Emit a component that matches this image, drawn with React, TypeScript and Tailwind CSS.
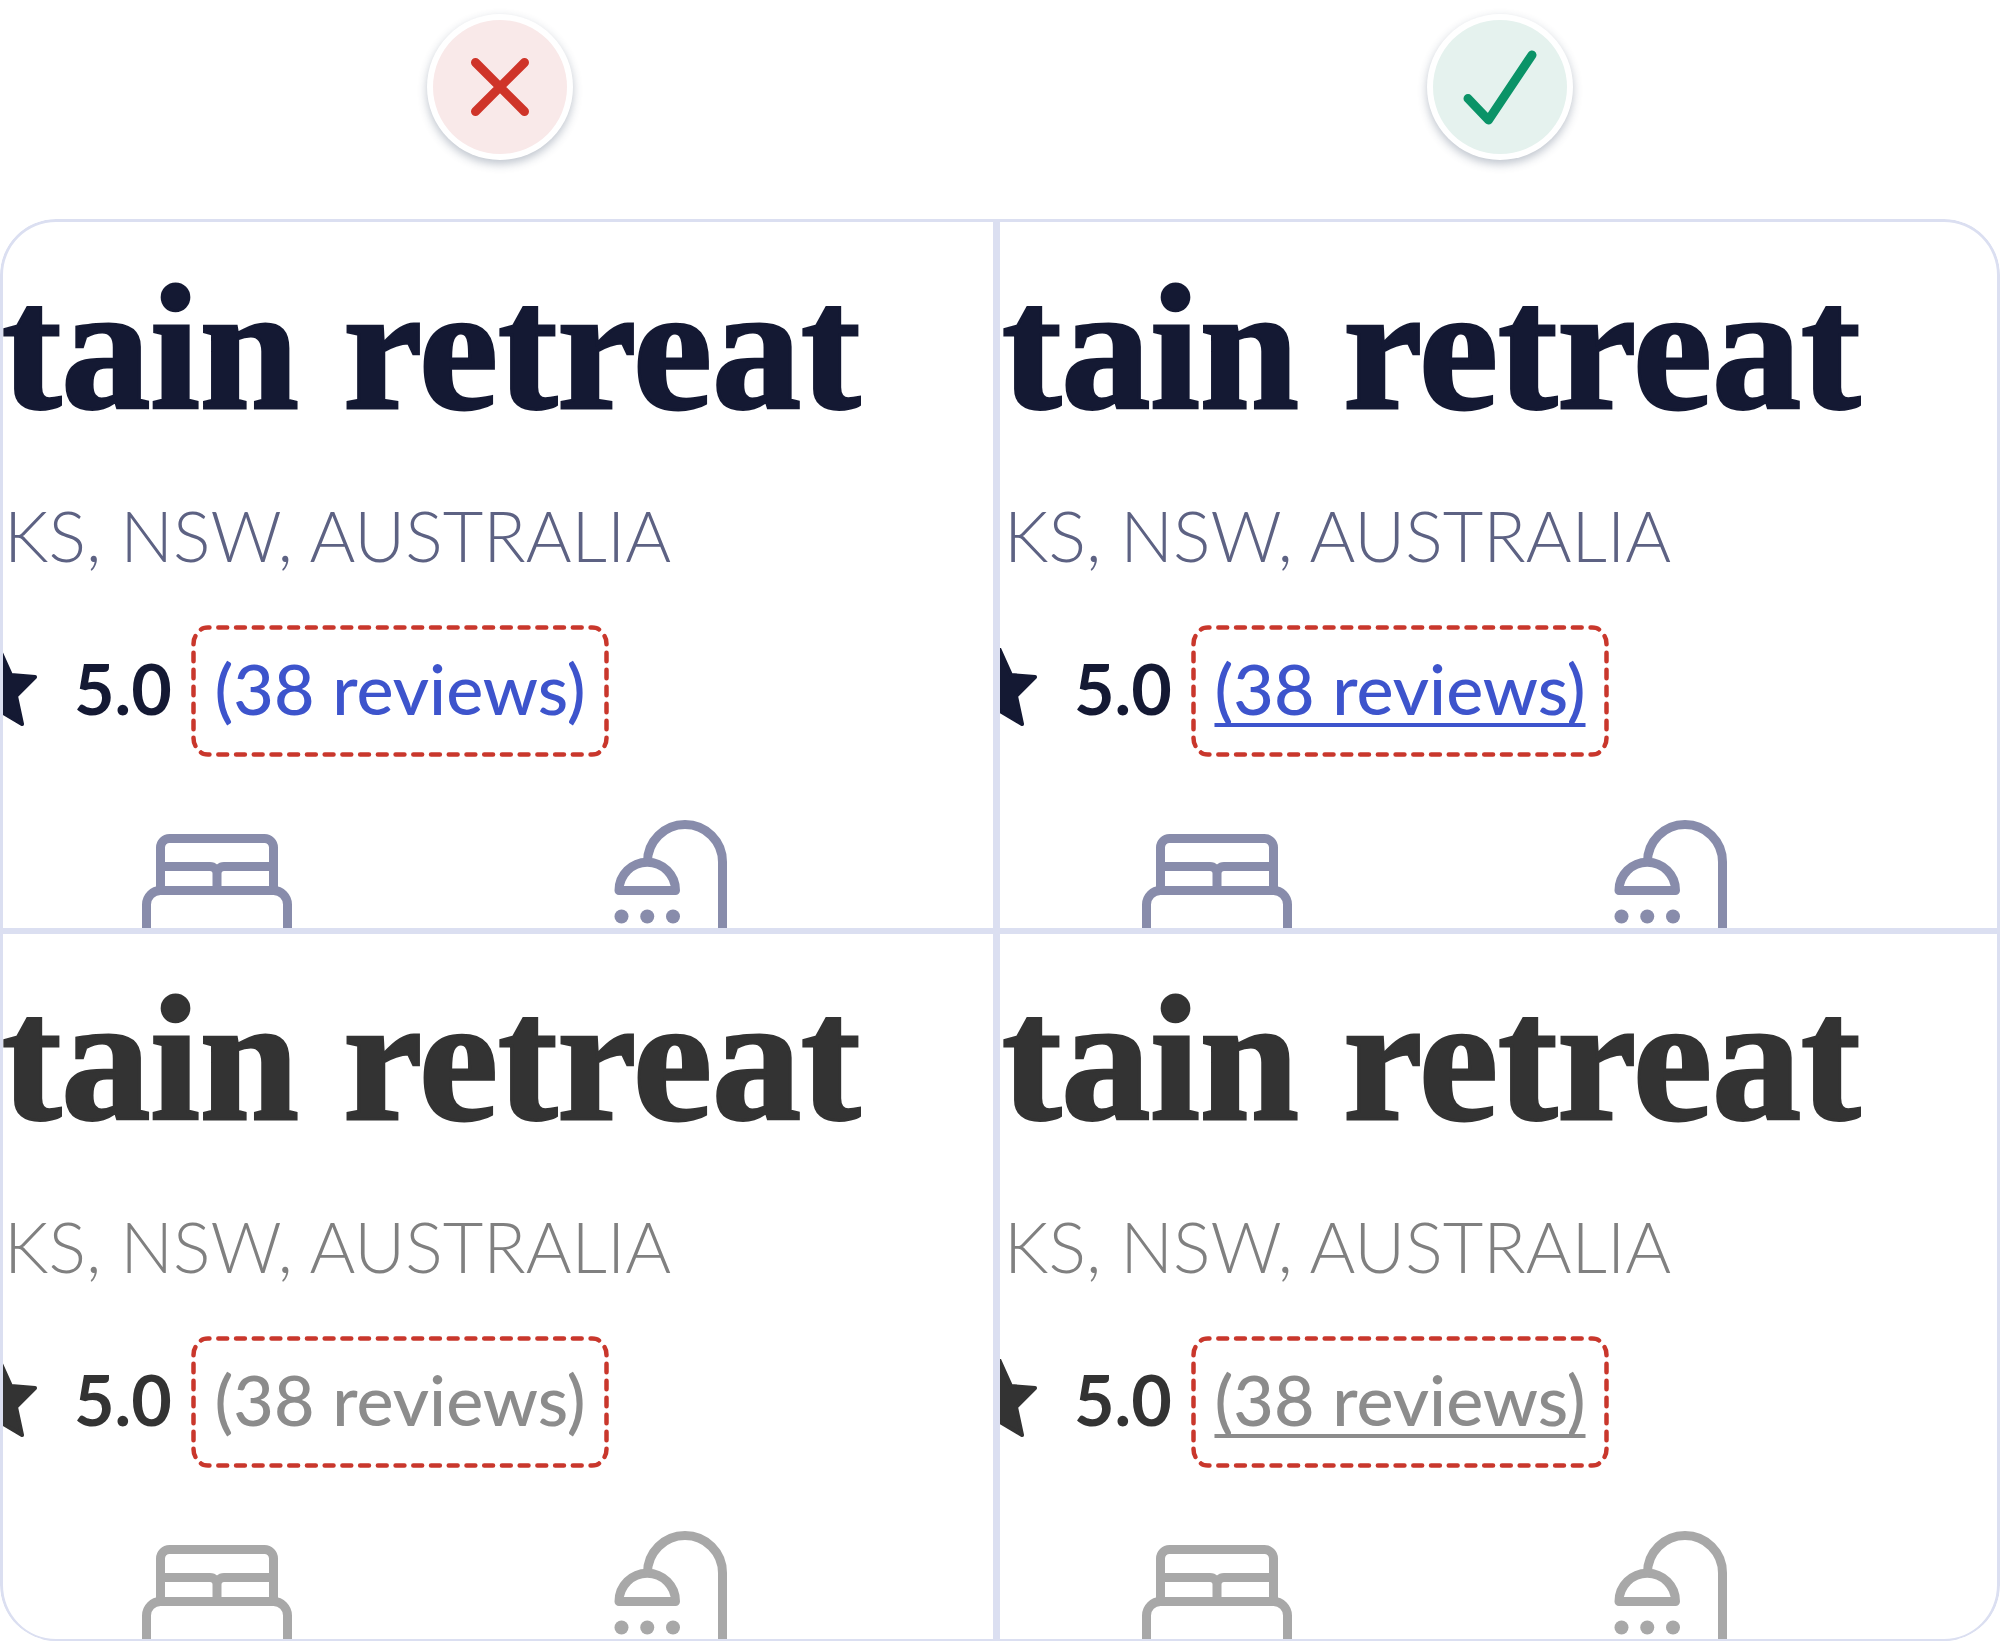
import React from "react";

type Tone = {
  title: string;
  place: string;
  link: string;
  icon: string;
};

const colour: Tone = {
  title: "text-[#141933]",
  place: "text-[#5d6283]",
  link: "text-[#3d54cc]",
  icon: "text-[#888cab]",
};

const greyscale: Tone = {
  title: "text-[#333333]",
  place: "text-[#808080]",
  link: "text-[#8c8c8c]",
  icon: "text-[#a8a8a8]",
};

function Badge({ className, label, children }: { className: string; label: string; children: React.ReactNode }) {
  return (
    <div className="flex justify-center">
      <div className="size-[146px] rounded-full bg-white p-[6px] shadow-[0_4px_10px_rgba(40,60,90,0.3)]">
        <div className={`size-full rounded-full ${className}`}>
          <svg viewBox="0 0 134 134" role="img" aria-label={label} className="size-full" fill="none" stroke="currentColor" strokeWidth="9" strokeLinecap="round" strokeLinejoin="round">
            {children}
          </svg>
        </div>
      </div>
    </div>
  );
}

function Star() {
  return (
    <svg width="38" height="80" viewBox="0 0 38 80" aria-hidden="true" className="shrink-0" fill="currentColor" stroke="currentColor" strokeWidth="4" strokeLinejoin="round">
      <path d="M-14 27L-3 -4L11 27L35 29L16 48L22 76L-3 61Z" />
    </svg>
  );
}

function Bed() {
  return (
    <svg width="150" height="95" viewBox="0 0 150 95" aria-hidden="true" fill="none" stroke="currentColor" strokeWidth="9">
      <path d="M18.5 57V14.5a9 9 0 0 1 9-9H122.5a9 9 0 0 1 9 9V57" />
      <path d="M18.5 33.5H68a7 7 0 0 1 7 7V57M131.5 33.5H82a7 7 0 0 0-7 7" />
      <path d="M4.5 96V71.5a14 14 0 0 1 14-14H131.5a14 14 0 0 1 14 14V96" />
    </svg>
  );
}

function Shower() {
  return (
    <svg width="114" height="108" viewBox="0 0 114 108" aria-hidden="true" fill="none" stroke="currentColor" strokeWidth="9" strokeLinejoin="round">
      <path d="M33.5 42a37.5 37.5 0 0 1 75 0V110" />
      <path d="M5 70.5a28.25 28.25 0 0 1 56.5 0z" />
      <g fill="currentColor" stroke="none">
        <circle cx="7.5" cy="96.5" r="7" />
        <circle cx="33.25" cy="96.5" r="7" />
        <circle cx="59" cy="96.5" r="7" />
      </g>
    </svg>
  );
}

function DashedOutline() {
  return (
    <svg viewBox="0 0 418 132" aria-hidden="true" className="absolute inset-0 size-full text-[#c9372c]" fill="none" stroke="currentColor" strokeWidth="4.5" strokeLinecap="round">
      <path pathLength="45" strokeDasharray="1 1" d="M10 4.5Q12 2.5 17 2.5H401Q406 2.5 408 4.5" />
      <path pathLength="45" strokeDasharray="1 1" d="M10 127.5Q12 129.5 17 129.5H401Q406 129.5 408 127.5" />
      <path pathLength="13" strokeDasharray="1 1" d="M4.5 11Q2.5 14 2.5 19V113Q2.5 118 4.5 121" />
      <path pathLength="13" strokeDasharray="1 1" d="M413.5 11Q415.5 14 415.5 19V113Q415.5 118 413.5 121" />
    </svg>
  );
}

function Listing({ tone, underlined, className }: { tone: Tone; underlined: boolean; className: string }) {
  return (
    <section className={`overflow-hidden border-[#dbdff1] ${className}`}>
      <h2 className={`whitespace-nowrap pl-0.5 font-['Liberation_Serif',serif] text-[178px] leading-[176px] font-bold [-webkit-text-stroke:3px_currentColor] ${tone.title}`}>
        tain retreat
      </h2>
      <p className={`mt-[57px] whitespace-nowrap pl-1 text-[70px] leading-[84px] font-light ${tone.place}`}>
        KS, NSW, AUSTRALIA
      </p>
      <div className="mt-12 flex items-center">
        <div className={`flex w-[191px] shrink-0 items-center gap-9 pb-1.5 text-[70px] leading-[84px] font-bold ${tone.title}`}>
          <Star />
          <span>5.0</span>
        </div>
        <div className="relative flex h-[132px] w-[418px] shrink-0 items-center justify-center pb-1.5">
          <DashedOutline />
          <a
            href="#reviews"
            className={`whitespace-nowrap text-[70px] leading-[84px] font-medium ${tone.link} ${
              underlined ? "underline decoration-4 underline-offset-8 [text-decoration-skip-ink:none]" : ""
            }`}
          >
            (38 reviews)
          </a>
        </div>
      </div>
      <div className={`mt-[63px] flex items-end gap-[322px] pl-[142px] ${tone.icon}`}>
        <Bed />
        <Shower />
      </div>
    </section>
  );
}

export default function App() {
  return (
    <main className="bg-white font-['Lato',sans-serif]">
      <header className="grid grid-cols-2 pt-[14px] pb-[59px]">
        <Badge label="Incorrect" className="bg-[#f9e9e9] text-[#cf3429]">
          <path d="M42.5 42.5L91.5 91.5M91.5 42.5L42.5 91.5" />
        </Badge>
        <Badge label="Correct" className="bg-[#e5f2ee] text-[#0a9367]">
          <path d="M35 78.5L55.5 100L99 35" />
        </Badge>
      </header>
      <div className="relative grid grid-cols-2 overflow-hidden rounded-[56px] after:pointer-events-none after:absolute after:inset-0 after:rounded-[56px] after:border-[3px] after:border-b-2 after:border-[#dbdff1]">
        <Listing tone={colour} underlined={false} className="border-r-[7px] border-b-[6px] pt-[41px]" />
        <Listing tone={colour} underlined className="border-b-[6px] pt-[41px]" />
        <Listing tone={greyscale} underlined={false} className="border-r-[7px] border-b-2 pt-[37px]" />
        <Listing tone={greyscale} underlined className="border-b-2 pt-[37px]" />
      </div>
    </main>
  );
}
